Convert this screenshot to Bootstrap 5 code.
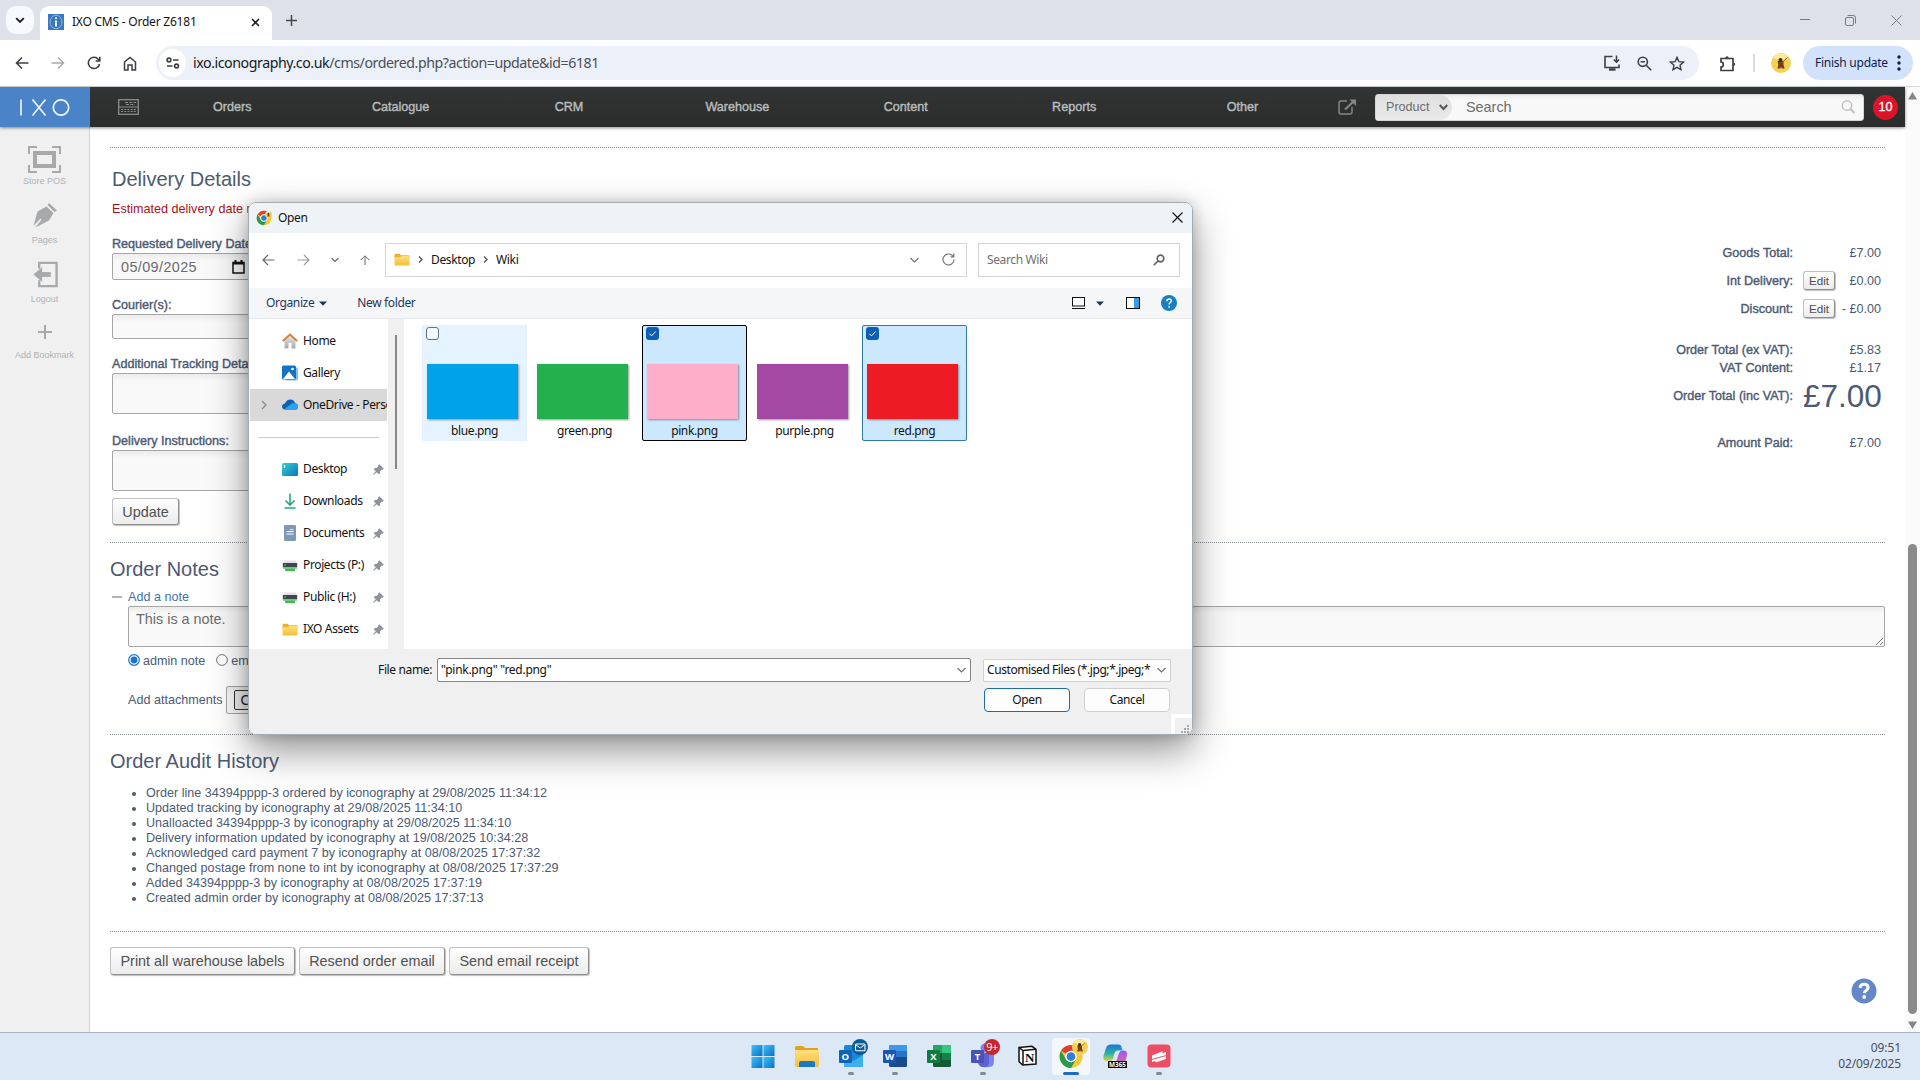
<!DOCTYPE html>
<html lang="en">
<head>
<meta charset="utf-8">
<title>IXO CMS - Order Z6181</title>
<link rel="stylesheet" href="https://cdn.jsdelivr.net/npm/bootstrap@5.3.0/dist/css/bootstrap.min.css">
<style>
html,body{height:100%}
body{overflow:hidden;width:1920px;height:1080px;font-family:"Liberation Sans",Arial,sans-serif;font-size:12.6px;line-height:18px;color:#4c5a73;background:#fff}
svg{display:block;flex:none}
.ui-font{font-family:"Noto Sans","Open Sans",sans-serif;color:#111}
/* browser chrome */
.tabstrip{height:40px;background:#dee1e9}
.tab-list{width:28px;height:28px;border-radius:10px;background:#f7f9fc;margin:6px 0 0 6px}
.browser-tab{width:232px;height:34px;margin:6px 0 0 6px;background:#fff;border-radius:9px 9px 0 0;padding:0 11px 2px 8px;font-size:12px;letter-spacing:-.22px}
.new-tab{margin-left:14px}
.tab-close{margin-right:1px}
.win-ctl{gap:35px;margin-right:18px;color:#777b82}
.toolbar{height:47px;background:#fff;border-bottom:1px solid #d5d9dc;padding:0 7px 0 15px}
.nav-icons{gap:22px}
.omnibox{height:34px;width:1543px;border-radius:17px;background:#ebf0f9;padding:0 14px 0 3px;margin-left:19px}
.omni-actions{gap:17px}
.site-info{width:27px;height:28px;border-radius:14px;background:#fff}
.url{font-size:14.2px;letter-spacing:-.44px;color:#4a4f57;margin-left:7px}
.url b{font-weight:400;color:#17191d}
.ext{margin-left:20px}
.tool-sep{width:2px;height:18px;margin:0 16px 0 17px;background:#d3dbe8}
.finish{height:34px;width:110px;border-radius:17px;background:#d3e2fb;font-size:12px;letter-spacing:-.25px;color:#0c1d4e;padding:0 12px}
/* page */
.viewport{height:945px}
.cms{width:1905px}
.cms-top{height:40px;background:linear-gradient(#323535,#2b2b2b);box-shadow:0 1px 3px rgba(0,0,0,.45);z-index:1}
.logo{width:90px;height:40px;background:#4a83c7}
.till{margin-left:28px}
.menu-list{margin-left:9px}
.menu-item{width:168.4px;color:#b9bcbc;-webkit-text-stroke:.4px #b9bcbc}
.popout{margin-left:11px}
.search-box{width:489px;height:27px;background:linear-gradient(#eceded,#f8f8f8 5px);border:1px solid #d5d5d5;border-radius:3px;font-size:14.4px;color:#6b6b6b;margin-right:9px}
.search-kind{width:76px;height:25px;background:linear-gradient(#dfdfdf,#eaeaea);border-radius:3px 14px 14px 3px;font-size:12.6px;padding:0 4px 0 10px}
.search-hint{margin-left:14px}
.search-icon{margin-right:7px}
.notif{width:25px;height:25px;border-radius:50%;background:#dc1427;color:#fff;font-size:12.6px;-webkit-text-stroke:.3px #fff;margin-right:7px}
.side{width:90px;background:#f0f0f0;border-right:1px solid #d2d3d5;color:#b1b2b4;font-size:9px;line-height:10px;padding-top:19px}
.side-link{margin-bottom:16px;gap:6px}
.side-link.pos{gap:3px}
.side-link.add{margin-top:21px;gap:11px}
.scroll{width:15px;background:#fbfbfb;padding:5px 0 3px}
.thumb-bar{width:9px;height:470px;border-radius:5px;background:#8b8b8b;margin:444px 0 7px}
.content{width:1775px;margin-left:20px;padding-top:20px}
.dots{border-top:1px dotted #84898e}
.sec-title{font-size:20px;line-height:24px;height:24px;font-weight:400;margin:14px 0 0;color:#4d5a72}
.lbl{height:17px;line-height:17px;-webkit-text-stroke:.4px #4c5a73}
.field{background:linear-gradient(#ececec,#f9f9f9 7px);border:1px solid #a6a6a6;border-radius:2px;width:400px;color:#6b6b6b;font-size:14.4px}
.delivery{height:394px}
.form-col{margin-left:2px;padding-top:5px}
.form-col .lbl{margin-top:17px}
.warn-text{margin-top:9px;color:#a90f20}
.form-col .lbl.first{margin-top:18px}
.form-col .lbl.last{margin-top:19px}
.date-field{height:27px;width:150px;padding-left:8px;letter-spacing:.4px}
.date-icon{margin-left:35px}
.courier{height:25px}
.area{height:41px}
.cms-btn{border:1px solid #c1c1c1;border-right-color:#8f8f8f;border-bottom-color:#8f8f8f;border-radius:3px;background:linear-gradient(#fefefe,#ececec);box-shadow:1px 1px 1px rgba(0,0,0,.25);color:#505050;font-size:14.4px;height:27px;display:inline-flex;align-items:center;justify-content:center;padding:0 8px;white-space:nowrap}
.cms-btn.tiny{width:32px;height:19px;font-size:11.7px;padding:0;margin-bottom:1px}
.update{margin-top:7px;width:67px}
.notes{height:191px;display:flow-root}
.add-note{height:18px;margin-top:7px;color:#4371ac}
.dash{width:10px;height:2px;background:#b1b3b5;margin:0 6px 0 2px}
.note-form{margin-left:18px}
.note-area{width:1757px;height:41px;padding:3px 7px}
.radios{height:20px;margin-top:4px}
.radios svg{margin-right:3px;margin-top:-2px}
.radio-b{margin-left:11px}
.attach{height:28px;margin-top:15px}
.attach-field{height:28px;width:320px;margin-left:3px;padding-left:7px}
.choose{border:1px solid #333;background:#efefef;height:20px;line-height:18px;padding:0 6px;color:#222;border-radius:2px}
.audit{list-style:disc;padding-left:36px;margin:13px 0 25px;line-height:15px}
.actions{margin-top:15px;gap:4px}
.actions .cms-btn{height:28px}
.print-btn{width:185px}.resend-btn{width:146px}.receipt-btn{width:140px}
.totals{margin-right:4px;padding-top:91px}
.t-row{height:28px}
.t-row.slim{height:18px}
.t-row.gap-top{margin-top:18px}
.t-row.grand{height:38px}
.t-row.paid{margin-top:14px}
.totals .lbl{margin-right:10px;text-align:right}
.totals .val{width:78px}
.big{font-size:31.5px}
.help{right:28px;bottom:28px}
/* file dialog */
.dlg{left:248px;top:202px;width:945px;height:533px;border:1px solid #a4abb1;border-radius:8px;background:#fff;overflow:hidden;font-size:12px;letter-spacing:-.37px;z-index:5}
.dlg-wrap{left:248px;top:202px;width:945px;height:533px;border-radius:8px;box-shadow:0 16px 38px rgba(0,0,0,.42),0 0 14px rgba(0,0,0,.18);z-index:4}
.dlg-title{height:30px;background:#eef3f8;padding:0 9px 1px 7px;gap:6px}
.dlg-nav{height:55px;padding:0 0 2px 13px}
.arrows{gap:21px}
.box{border:1px solid #d6d6d6;height:34px;background:#fff}
.path-box{width:582px;margin-left:15px;padding:0 11px 0 8px}
.crumb{margin:0 8px}
.reload{margin-left:23px}
.find-box{width:202px;margin-left:11px;padding:0 14px 0 8px;color:#707070}
.cmdbar{height:31px;background:#f5f6f8;border-bottom:1px solid #e6e8ea;color:#1f3559;padding:0 15px 0 17px}
.organize{margin:0 30px 0 5px}
.view-arrow{margin:0 22px 0 11px}
.help-dot{margin-left:21px}
.dlg-body{height:330px}
.tree{width:139px;padding:6px 0 0 1px}
.tree-item{height:32px;padding-left:32px;white-space:nowrap;overflow:hidden;width:137px}
.tree-item.current{background:#d9d9d9;padding-left:11px}
.tree-item.rule{padding-left:8px}
.tree-item.rule i{width:121px;height:1px;background:#ccc}
.tree-item span{margin-left:5px}
.tree-chev{margin-right:15px}
.pin-icon{margin:0 3px 0 auto}
.tree-gutter{width:16px;background:#f0f0f0;padding:16px 0 0 7px}
.tree-gutter i{display:block;width:2px;height:134px;background:#868686}
.files{padding:6px 0 0 18px;gap:5px}
.file{width:105px;height:116px;border:1px solid transparent;padding:1px 4px 1px 4px}
.file.hot{background:#e5f3ff}
.file.sel{background:#cce8ff;border-color:#2f7aa8;border-radius:2px}
.file.focus-item{border-color:#000}
.chk{width:13px;height:13px;border-radius:3px;margin-left:-1px}
.chk.on{background:#0a5fb4}
.chk.off{border:1px solid #65717e;background:#f4f9fe}
.pic{width:91px;height:55px;margin-top:24px;box-shadow:1px 1px 2px rgba(0,0,0,.4)}
.pic-blue{background:#00a2e8}.pic-green{background:#22b14c}.pic-pink{background:#ffaec9}.pic-purple{background:#a349a4}.pic-red{background:#ed1c24}
.fname{line-height:18px;margin-top:3px;text-align:center}
.dlg-foot{height:85px;background:#f0f0f0}
.foot-row{padding-top:9px}
.fn-label{width:183px}
.fn-input{width:534px;height:24px;margin-left:5px;border:1px solid #868686;border-radius:2px;padding:0 4px 0 3px;letter-spacing:-.28px}
.fn-type{width:188px;height:23px;margin-left:12px;border:1px solid #cfcfcf;border-radius:2px;background:#fdfdfd;padding:0 4px 0 3px;letter-spacing:-.42px}
.foot-btns{margin:6px 0 0 735px;gap:14px}
.w-btn{height:24px;width:86px;border:1px solid #cfcfcf;border-radius:4px;background:#fdfdfd}
.w-btn.main{border-color:#1b6f9f}
.grip{right:0;bottom:0;width:21px;height:20px;border:4px solid #fff;border-width:4px 0 0 4px;padding:7px 0 0 6px}
/* taskbar */
.taskbar{height:48px;background:#dce8f6;border-top:1px solid #a8b4c4}
.apps{margin-left:2px}
.clock{right:19px;top:7px;font-size:12px;line-height:16px;letter-spacing:-.1px;color:#4a4f57}
</style>
</head>
<body class="d-flex flex-column">
<svg width="0" height="0" class="position-absolute">
  <defs>
    <linearGradient id="gw" x1="0" y1="0" x2="1" y2="1"><stop offset="0" stop-color="#3cc2f3"/><stop offset="1" stop-color="#0b6fcf"/></linearGradient>
    <linearGradient id="gd" x1="0" y1="0" x2="1" y2="1"><stop offset="0" stop-color="#35cdd8"/><stop offset="1" stop-color="#0b76b8"/></linearGradient>
    <linearGradient id="gf" x1="0" y1="0" x2="0" y2="1"><stop offset="0" stop-color="#ffdf7c"/><stop offset="1" stop-color="#f3be3a"/></linearGradient>
    <linearGradient id="gh" x1="0" y1="0" x2="0" y2="1"><stop offset="0" stop-color="#e9e9ea"/><stop offset="1" stop-color="#a9a9ab"/></linearGradient>
    <linearGradient id="gm" x1="0" y1="0" x2="0" y2="1"><stop offset="0" stop-color="#1b74d8"/><stop offset=".55" stop-color="#2fb3a0"/><stop offset="1" stop-color="#d9cf4a"/></linearGradient>
    <linearGradient id="gn" x1="0" y1="0" x2="0" y2="1"><stop offset="0" stop-color="#8f5cf0"/><stop offset="1" stop-color="#ef6aa4"/></linearGradient>
  </defs>
  <symbol id="pin" viewBox="0 0 12 12"><path d="M7 .3 11.700 5 10.300 6.500 9.300 6.200 7.800 7.800 7.500 10.300 6.300 11.200 4 8.900 1 11.700.3 11 3.100 8 .8 5.700 1.700 4.500 4.200 4.200 5.800 2.700 5.500 1.700z" fill="#8d9299"/></symbol>
  <symbol id="folder" viewBox="0 0 16 13"><path d="M.5 2Q.5.7 1.800.7H5.500L7 2.300h7.200q1.300 0 1.300 1.300V6H.5z" fill="#e9b22e"/><path d="M.5 4.200H5.800L7.200 3h7q1.300 0 1.300 1.200v7q0 1.300-1.300 1.300H1.800Q.5 12.500.5 11.200z" fill="url(#gf)"/></symbol>
  <symbol id="drive" viewBox="0 0 16 13"><path d="M2.500 1.500h11l1.700 3H.8z" fill="#dfe2e4"/><rect x=".8" y="4" width="14.400" height="4.500" fill="#41474a"/><path d="M2 6h2" stroke="#5bd06c"/><rect x="3" y="9" width="10" height="3.300" rx="1" fill="#46b25b"/><rect x="1" y="8.500" width="14" height="1.300" fill="#74cc84"/></symbol>
  <symbol id="chrome" viewBox="0 0 24 24"><circle cx="12" cy="12" r="11" fill="#f6c831"/><path d="M12 12 2.500 6.500A11 11 0 0 1 21.500 6.500H12z" fill="#dd4032"/><path d="M2.500 6.500A11 11 0 0 0 12 23L16.800 14.800 12 17 7.200 14.800z" fill="#2a9b4b"/><circle cx="12" cy="12" r="5.500" fill="#fff"/><circle cx="12" cy="12" r="4.200" fill="#2f7de1"/></symbol>
  <symbol id="cheese" viewBox="0 0 20 20"><circle cx="10" cy="10" r="10" fill="#f3d154"/><path d="M2 4.500A10 10 0 0 1 18 4.500L10 9z" fill="#fbeb9e"/><path d="M6.500 8h6v4l1.200 3.500h-3L10 13.500l-.6 2H6.500l.8-3.500z" fill="#7b3d16"/><circle cx="9.500" cy="7" r="2" fill="#4b2a10"/><path d="m11 9.500 5.500-5" stroke="#8a5a20"/></symbol>
  <symbol id="down" viewBox="0 0 9 6"><path d="m.5 1 4 4 4-4" fill="none" stroke="#6c6c6c" stroke-width="1.100"/></symbol>
  <symbol id="crumb" viewBox="0 0 5 7"><path d="m1 .5 3 3-3 3" fill="none" stroke="#555" stroke-width="1.400"/></symbol>
  <symbol id="caret" viewBox="0 0 8 5"><path d="M0 .5h8L4 4.800z" fill="#1f3559"/></symbol>
  <symbol id="tick" viewBox="0 0 13 13"><path d="m3.300 6.700 2.200 2.200 4.200-4.400" fill="none" stroke="#fff"/></symbol>
</svg>

<!-- tab strip -->
<header class="tabstrip d-flex">
  <div class="tab-list d-flex align-items-center justify-content-center"><svg width="10" height="7" viewBox="0 0 10 7" fill="none" stroke="#1b1c1f" stroke-width="1.800"><path d="M1.200 1.200 5 5 8.800 1.200"/></svg></div>
  <div class="browser-tab ui-font d-flex align-items-center">
    <svg width="16" height="16" viewBox="0 0 16 16"><rect width="16" height="16" fill="#3d78bd"/><ellipse cx="8" cy="8" rx="6" ry="6.800" fill="none" stroke="#8fc3ea" stroke-width=".9"/><path d="M8 6.500V12.500M8 3.200v1.800" stroke="#fff" stroke-width="1.800"/></svg>
    <span class="ms-2">IXO CMS - Order Z6181</span>
    <svg class="ms-auto tab-close" width="9" height="9" viewBox="0 0 9 9" stroke="#222" stroke-width="1.600"><path d="m1 1 7 7M8 1 1 8"/></svg>
  </div>
  <svg class="align-self-center new-tab" width="11" height="11" viewBox="0 0 11 11" stroke="#45484d" stroke-width="1.500"><path d="M5.500 0v11M0 5.500h11"/></svg>
  <div class="win-ctl ms-auto d-flex align-items-center">
    <svg width="10" height="10" viewBox="0 0 10 10" stroke="currentColor"><path d="M0 4.500h10"/></svg>
    <svg width="11" height="11" viewBox="0 0 11 11" fill="none" stroke="currentColor"><rect x=".5" y="2.500" width="8" height="8" rx="1.500"/><path d="M2.500.5h6q2 0 2 2v6"/></svg>
    <svg width="11" height="11" viewBox="0 0 11 11" stroke="currentColor"><path d="m.5.5 10 10M10.500.5l-10 10"/></svg>
  </div>
</header>

<!-- toolbar -->
<div class="toolbar d-flex align-items-center">
  <div class="nav-icons d-flex align-items-center">
    <svg width="14" height="14" viewBox="0 0 14 14" fill="none" stroke="#3c4045" stroke-width="1.600"><path d="M13.500 7H1.500M7 1.500 1.500 7 7 12.500"/></svg>
    <svg width="14" height="14" viewBox="0 0 14 14" fill="none" stroke="#a6a9ad" stroke-width="1.500"><path d="M.5 7h12M7 1.500 12.500 7 7 12.500"/></svg>
    <svg width="14" height="14" viewBox="0 0 14 14" fill="none" stroke="#3c4045" stroke-width="1.600"><path d="M12.500 8A5.600 5.600 0 1 1 11.200 3.200L12.500 4.800M12.800.8V5H8.600"/></svg>
    <svg width="14" height="15" viewBox="0 0 14 15" fill="none" stroke="#3c4045" stroke-width="1.500"><path d="M1.500 6 7 1.500 12.500 6v8H9V9H5v5H1.500z"/></svg>
  </div>
  <div class="omnibox d-flex align-items-center">
    <div class="site-info d-flex align-items-center justify-content-center"><svg width="14" height="12" viewBox="0 0 14 12" fill="none" stroke="#3c4045" stroke-width="1.600"><circle cx="3" cy="3" r="1.900"/><path d="M7 3h5.500M1 9h5.500"/><circle cx="10.500" cy="9" r="1.900"/></svg></div>
    <span class="url ui-font"><b>ixo.iconography.co.uk</b>/cms/ordered.php?action=update&amp;id=6181</span>
    <div class="omni-actions ms-auto d-flex align-items-center">
      <svg width="16" height="16" viewBox="0 0 16 16" fill="none" stroke="#3c4045" stroke-width="1.600"><path d="M8.500 1.500H1V12.500h14V9.500M12.500.5v6.500M9.800 4.500 12.500 7.200 15.200 4.500"/><path d="M5 14.500h6.500" stroke-width="2.400"/></svg>
      <svg width="15" height="15" viewBox="0 0 15 15" fill="none" stroke="#3c4045" stroke-width="1.600"><circle cx="5.800" cy="5.800" r="4.600"/><path d="m9.200 9.200 5 5M3.600 5.800H8"/></svg>
      <svg width="16" height="15" viewBox="0 0 16 15" fill="none" stroke="#3c4045" stroke-width="1.400"><path d="m8 1.400 1.900 4.300 4.600.4L11 9.200l1 4.500L8 11.300l-4 2.400 1-4.500L1.500 6.100l4.600-.4z"/></svg>
    </div>
  </div>
  <svg class="ext" width="17" height="17" viewBox="0 0 17 17" fill="none" stroke="#3c4045" stroke-width="1.700"><path d="M2 3.500H14V15.500H2V12q2.300 0 2.300-2.500T2 7z"/><path d="M6.300 3a1.700 1.700 0 0 1 3.400 0zM14.500 7.500a1.700 1.700 0 0 1 0 3.400z" fill="#3c4045" stroke="none"/></svg>
  <span class="tool-sep"></span>
  <svg width="20" height="20"><use href="#cheese"/></svg>
  <div class="finish ui-font d-flex align-items-center ms-auto"><span class="text-nowrap">Finish update</span>
    <svg class="ms-auto" width="4" height="16" viewBox="0 0 4 16" fill="#0c1d4e"><circle cx="2" cy="2" r="1.700"/><circle cx="2" cy="8" r="1.700"/><circle cx="2" cy="14" r="1.700"/></svg></div>
</div>

<!-- page viewport -->
<div class="viewport d-flex">
  <div class="cms d-flex flex-column position-relative">
    <nav class="cms-top d-flex align-items-center position-relative">
      <div class="logo d-flex align-items-center justify-content-center"><svg width="50" height="17" viewBox="0 0 50 17" fill="none" stroke="#eaf3fd" stroke-width="1.700"><path d="M1 .5v16M12.500.5l13 16M25.500.5l-13 16"/><circle cx="41" cy="8.500" r="7.700"/></svg></div>
      <svg class="till" width="21" height="16" viewBox="0 0 21 16" fill="none" stroke="#8a8c8c"><rect x=".7" y=".7" width="19.600" height="14.600" stroke-width="1.300"/><path d="M1 8h19"/><path d="M7 3.500h11M8 5.500h9" stroke-dasharray="3 1.300"/><path d="M3 10.500h15M3 12.500h15" stroke-dasharray="2 1.200"/></svg>
      <div class="menu-list d-flex text-center">
        <div class="menu-item">Orders</div><div class="menu-item">Catalogue</div><div class="menu-item">CRM</div><div class="menu-item">Warehouse</div><div class="menu-item">Content</div><div class="menu-item">Reports</div><div class="menu-item">Other</div>
      </div>
      <svg class="popout" width="19" height="16" viewBox="0 0 19 16" fill="none" stroke="#858787" stroke-width="1.500"><path d="M9 2H3Q1 2 1 4v9q0 2 2 2h9q2 0 2-2V8"/><path d="M7 10.500 15.500 2.500" stroke-width="2.200"/><path d="M11.500.5H18V7z" fill="#858787" stroke="none"/></svg>
      <div class="search-box d-flex align-items-center ms-auto">
        <div class="search-kind d-flex align-items-center justify-content-between"><span>Product</span><svg width="9" height="7" viewBox="0 0 9 7" fill="none" stroke="#555" stroke-width="2"><path d="m.8 1 3.700 4L8.200 1"/></svg></div>
        <span class="search-hint">Search</span>
        <svg class="search-icon ms-auto" width="15" height="14" viewBox="0 0 15 14" fill="none" stroke="#bfc0c0" stroke-width="1.500"><circle cx="6" cy="5.500" r="4.700"/><path d="m9.500 9 4 4" stroke-width="2.200"/></svg>
      </div>
      <div class="notif d-flex align-items-center justify-content-center">10</div>
    </nav>
    <div class="d-flex flex-grow-1">
      <aside class="side">
        <div class="side-link pos d-flex flex-column align-items-center"><svg width="33" height="27" viewBox="0 0 33 27" fill="none" stroke="#a7a9ab"><path d="M9 1H1v7M24 1h8v7M9 26H1v-7M24 26h8v-7" stroke-width="2"/><rect x="7" y="7" width="19" height="13" stroke-width="4"/></svg>Store POS</div>
        <div class="side-link d-flex flex-column align-items-center"><svg width="26" height="27" viewBox="0 0 26 27"><path d="M17 1 25 8.500 22.500 10 15.500 3zM14.500 4.500 21.500 11 17 18.500 3.500 25.500 9.500 17.500 8.500 16.500 1.500 24 5.500 9.500z" fill="#a7a9ab"/></svg>Pages</div>
        <div class="side-link d-flex flex-column align-items-center"><svg width="26" height="27" viewBox="0 0 26 28" fill="none" stroke="#a7a9ab"><path d="M7 8V2H25V26H7V20" stroke-width="2.400"/><path d="M19 14H6" stroke-width="5"/><path d="M10 6.500 1 14l9 7.500z" fill="#a7a9ab" stroke="none"/></svg>Logout</div>
        <div class="side-link add d-flex flex-column align-items-center"><svg width="14" height="14" viewBox="0 0 14 14" stroke="#a7a9ab" stroke-width="2"><path d="M7 0v14M0 7h14"/></svg>Add Bookmark</div>
      </aside>
      <main class="content">
        <div class="dots"></div>
        <section class="delivery d-flex justify-content-between">
          <div class="form-col">
            <h2 class="sec-title">Delivery Details</h2>
            <div class="warn-text">Estimated delivery date not set</div>
            <div class="lbl first">Requested Delivery Date:</div>
            <div class="field date-field d-flex align-items-center"><span>05/09/2025</span><svg class="date-icon" width="13" height="14" viewBox="0 0 13 14" fill="none" stroke="#111" stroke-width="1.500"><rect x="1" y="2.500" width="11" height="10.500"/><path d="M1 3.500h11M3.500 0v3M9.500 0v3" stroke-width="2"/></svg></div>
            <div class="lbl">Courier(s):</div>
            <div class="field courier"></div>
            <div class="lbl">Additional Tracking Details:</div>
            <div class="field area"></div>
            <div class="lbl last">Delivery Instructions:</div>
            <div class="field area"></div>
            <button class="cms-btn update">Update</button>
          </div>
          <div class="totals">
            <div class="t-row d-flex align-items-center justify-content-end"><span class="lbl">Goods Total:</span><span class="val text-end">£7.00</span></div>
            <div class="t-row d-flex align-items-center justify-content-end"><span class="lbl">Int Delivery:</span><span class="val d-flex justify-content-between align-items-center"><button class="cms-btn tiny">Edit</button>£0.00</span></div>
            <div class="t-row d-flex align-items-center justify-content-end"><span class="lbl">Discount:</span><span class="val d-flex justify-content-between align-items-center"><button class="cms-btn tiny">Edit</button>- £0.00</span></div>
            <div class="t-row slim gap-top d-flex align-items-center justify-content-end"><span class="lbl">Order Total (ex VAT):</span><span class="val text-end">£5.83</span></div>
            <div class="t-row slim d-flex align-items-center justify-content-end"><span class="lbl">VAT Content:</span><span class="val text-end">£1.17</span></div>
            <div class="t-row grand d-flex align-items-center justify-content-end"><span class="lbl">Order Total (inc VAT):</span><span class="val text-end big">£7.00</span></div>
            <div class="t-row paid d-flex align-items-center justify-content-end"><span class="lbl">Amount Paid:</span><span class="val text-end">£7.00</span></div>
          </div>
        </section>
        <div class="dots"></div>
        <section class="notes">
          <h2 class="sec-title">Order Notes</h2>
          <div class="add-note d-flex align-items-center"><span class="dash"></span>Add a note</div>
          <div class="note-form">
            <div class="field note-area position-relative">This is a note.
              <svg class="position-absolute bottom-0 end-0" width="9" height="9" viewBox="0 0 9 9" stroke="#777"><path d="M8 1 1 8M8 5 5 8"/></svg></div>
            <div class="radios d-flex align-items-center">
              <svg width="12" height="12" viewBox="0 0 12 12"><circle cx="6" cy="6" r="5.300" fill="#fff" stroke="#1a73c9" stroke-width="1.200"/><circle cx="6" cy="6" r="3.400" fill="#1a73c9"/></svg>admin note
              <svg class="radio-b" width="12" height="12" viewBox="0 0 12 12"><circle cx="6" cy="6" r="5.400" fill="#fff" stroke="#767676"/></svg>email note
            </div>
            <div class="attach d-flex align-items-center">Add attachments
              <div class="field attach-field d-flex align-items-center"><span class="choose">Choose files</span></div></div>
          </div>
        </section>
        <div class="dots"></div>
        <h2 class="sec-title">Order Audit History</h2>
        <ul class="audit">
          <li>Order line 34394pppp-3 ordered by iconography at 29/08/2025 11:34:12</li>
          <li>Updated tracking by iconography at 29/08/2025 11:34:10</li>
          <li>Unalloacted 34394pppp-3 by iconography at 29/08/2025 11:34:10</li>
          <li>Delivery information updated by iconography at 19/08/2025 10:34:28</li>
          <li>Acknowledged card payment 7 by iconography at 08/08/2025 17:37:32</li>
          <li>Changed postage from none to int by iconography at 08/08/2025 17:37:29</li>
          <li>Added 34394pppp-3 by iconography at 08/08/2025 17:37:19</li>
          <li>Created admin order by iconography at 08/08/2025 17:37:13</li>
        </ul>
        <div class="dots"></div>
        <div class="actions d-flex">
          <button class="cms-btn print-btn">Print all warehouse labels</button>
          <button class="cms-btn resend-btn">Resend order email</button>
          <button class="cms-btn receipt-btn">Send email receipt</button>
        </div>
      </main>
    </div>
    <svg class="help position-absolute" width="26" height="26" viewBox="0 0 26 26"><circle cx="13" cy="13" r="12.500" fill="#6487c8"/><path d="M9 9.800q.3-3.600 4.100-3.600 4 0 4 3.200 0 1.800-2 3.100-1.700 1-1.700 2.800" fill="none" stroke="#fff" stroke-width="3"/><circle cx="13.200" cy="19" r="1.900" fill="#fff"/></svg>
  </div>
  <div class="scroll d-flex flex-column align-items-center">
    <svg width="9" height="8" viewBox="0 0 9 8" fill="#858585"><path d="M4.500 0 9 7.500H0z"/></svg>
    <div class="thumb-bar"></div>
    <svg width="9" height="8" viewBox="0 0 9 8" fill="#858585"><path d="M4.500 8 9 .5H0z"/></svg>
  </div>
</div>

<!-- taskbar -->
<footer class="taskbar position-relative d-flex justify-content-center">
  <div class="apps d-flex">
    <svg width="44" height="46" viewBox="0 0 44 46"><g fill="url(#gw)"><rect x="10.500" y="12" width="11" height="11"/><rect x="22.500" y="12" width="11" height="11"/><rect x="10.500" y="24" width="11" height="11"/><rect x="22.500" y="24" width="11" height="11"/></g></svg>
    <svg width="44" height="46" viewBox="0 0 44 46"><path d="M10 15q0-2 2-2h6l2 2h13v6H10z" fill="#e0a320"/><path d="M10 17h24v15q0 2-2 2H12q-2 0-2-2z" fill="url(#gf)"/><path d="M14 34v-4q0-2 2-2h12q2 0 2 2v4z" fill="#1977c4"/></svg>
    <svg width="44" height="46" viewBox="0 0 44 46"><rect x="15" y="12" width="19" height="22" rx="1.500" fill="#1c87d8"/><path d="m15 22 9.500 6L34 22v12H15z" fill="#3fb0ee"/><rect x="10" y="17" width="13" height="13" rx="1" fill="#0d63b5"/><text x="16.300" y="27" font-family="Open Sans" font-weight="700" font-size="9.500" text-anchor="middle" fill="#fff">O</text><circle cx="31" cy="14" r="8" fill="#0c5a99"/><rect x="26.500" y="11" width="9.500" height="6.800" rx="1" fill="none" stroke="#fff" stroke-width="1.100"/><path d="m27 12 4.200 3 4.200-3" fill="none" stroke="#fff"/><rect x="19" y="39" width="6" height="3" rx="1.500" fill="#85898f"/></svg>
    <svg width="44" height="46" viewBox="0 0 44 46"><rect x="16" y="12" width="18" height="22" rx="1.500" fill="#184a94"/><path d="M16 12h18v6H16z" fill="#3d9ae6"/><path d="M16 18h18v6H16z" fill="#2a72cc"/><rect x="10" y="17" width="13" height="13" rx="1" fill="#1856b0"/><text x="16.500" y="27" font-family="Open Sans" font-weight="700" font-size="9.500" text-anchor="middle" fill="#fff">W</text><rect x="19" y="39" width="6" height="3" rx="1.500" fill="#85898f"/></svg>
    <svg width="44" height="46" viewBox="0 0 44 46"><rect x="16" y="12" width="18" height="22" rx="1.500" fill="#145c35"/><path d="M16 12h9v8h-9z" fill="#24a365"/><path d="M25 12h9v8h-9z" fill="#36c481"/><path d="M25 20h9v7h-9z" fill="#178045"/><rect x="10" y="17" width="13" height="13" rx="1" fill="#107a40"/><text x="16.500" y="27" font-family="Open Sans" font-weight="700" font-size="9.500" text-anchor="middle" fill="#fff">X</text></svg>
    <svg width="44" height="46" viewBox="0 0 44 46"><circle cx="24" cy="15" r="4.500" fill="#7b83eb"/><path d="M17 20h16v8q0 6-5 6-11 2-11-7z" fill="#7b83eb"/><path d="M17 20h11v9q0 5-5 5-6 0-6-6z" fill="#5c62cf"/><rect x="10" y="17" width="13" height="13" rx="1" fill="#4a52b5"/><text x="16.500" y="27" font-family="Open Sans" font-weight="700" font-size="9.500" text-anchor="middle" fill="#fff">T</text><circle cx="31" cy="14" r="8" fill="#c5282c"/><text x="31" y="18" font-family="Open Sans" font-size="11" text-anchor="middle" letter-spacing="-.5" fill="#fff">9+</text><rect x="19" y="39" width="6" height="3" rx="1.500" fill="#85898f"/></svg>
    <svg width="44" height="46" viewBox="0 0 44 46"><path d="m14 14.500 13-1.200 4 3V31l-13.500 1L14 28.500z" fill="#fff" stroke="#111" stroke-width="1.500"/><path d="m14 14.500 4 3L31 16.300M18 17.500V32" fill="none" stroke="#111" stroke-width="1.500"/><text x="24.600" y="29.300" font-family="Liberation Serif" font-weight="700" font-size="13" text-anchor="middle" fill="#111">N</text></svg>
    <svg width="44" height="46" viewBox="0 0 44 46"><rect x="3" y="5" width="38" height="37" rx="4" fill="#f4f8fd"/><use href="#chrome" x="9.500" y="11" width="25" height="25"/><use href="#cheese" x="23" y="6" width="16" height="16"/><rect x="14" y="39" width="16" height="3" rx="1.500" fill="#1a6fc0"/></svg>
    <svg width="44" height="46" viewBox="0 0 44 46"><path d="M13.500 28q-4 0-3-5l2.500-8q1-3.500 5-3.500h7.500q2.500 0 3.200 3l.8 3h-4.500q-3 0-4 4l-1 4q-.8 2.500-3.500 2.500z" fill="url(#gm)"/><path d="M30 17.500q5 0 4 5l-2 7q-1 4-5 4h-7l3-4 2.500-8q1-4 4.500-4z" fill="url(#gn)"/><rect x="15" y="28" width="19" height="7" fill="#050505"/><text x="24.500" y="34.200" font-family="Open Sans" font-weight="700" font-size="7.500" text-anchor="middle" textLength="17" lengthAdjust="spacingAndGlyphs" fill="#fff">M365</text></svg>
    <svg width="44" height="46" viewBox="0 0 44 46"><rect x="10.500" y="11.500" width="23" height="23" rx="4" fill="#ee4e63"/><path d="M15 22.500 25.500 18.300V20.300L29 19V22L15 26zM15 27 29 23V26L18.500 29.500V27.800L15 29z" fill="#fff"/><rect x="19" y="39" width="6" height="3" rx="1.500" fill="#85898f"/></svg>
  </div>
  <div class="clock ui-font position-absolute text-end">09:51<br>02/09/2025</div>
</footer>

<!-- file open dialog -->
<div class="dlg-wrap position-absolute"></div>
<div class="dlg ui-font position-absolute d-flex flex-column">
  <div class="dlg-title d-flex align-items-center"><svg width="16" height="16" viewBox="0 0 16 16"><use href="#chrome" width="16" height="16"/><use href="#cheese" x="9" y="1" width="7" height="7"/></svg><span>Open</span>
    <svg class="ms-auto" width="11" height="11" viewBox="0 0 11 11" stroke="#111" stroke-width="1.200"><path d="m.5.500 10 10M10.500.5l-10 10"/></svg></div>
  <div class="dlg-nav d-flex align-items-center">
    <div class="arrows d-flex align-items-center">
      <svg width="13" height="12" viewBox="0 0 13 12" fill="none" stroke="#6a6a6a" stroke-width="1.200"><path d="M12.500 6H1M6 1 1 6l5 5"/></svg>
      <svg width="14" height="12" viewBox="0 0 14 12" fill="none" stroke="#9a9a9a" stroke-width="1.200"><path d="M1.500 6H13M8 1l5 5-5 5"/></svg>
      <svg width="8" height="6" viewBox="0 0 8 6" fill="none" stroke="#666" stroke-width="1.200"><path d="m.5 1 3.500 3.500L7.500 1"/></svg>
      <svg width="10" height="12" viewBox="0 0 12 12" fill="none" stroke="#6a6a6a" stroke-width="1.200"><path d="M6 12V1M1 6l5-5 5 5"/></svg>
    </div>
    <div class="box path-box d-flex align-items-center">
      <svg width="16" height="13"><use href="#folder"/></svg>
      <svg class="crumb" width="5" height="7"><use href="#crumb"/></svg><span>Desktop</span>
      <svg class="crumb" width="5" height="7"><use href="#crumb"/></svg><span>Wiki</span>
      <svg class="ms-auto" width="9" height="6"><use href="#down"/></svg>
      <svg class="reload" width="13" height="13" viewBox="0 0 13 13" fill="none" stroke="#777" stroke-width="1.200"><path d="M12 6.500A5.500 5.500 0 1 1 9.800 2.100L11.500 3.500M11.800.5v3.300H8.500"/></svg>
    </div>
    <div class="box find-box d-flex align-items-center"><span>Search Wiki</span><svg class="ms-auto" width="12" height="12" viewBox="0 0 12 12" fill="none" stroke="#666" stroke-width="1.700"><circle cx="7.500" cy="4.500" r="3.300"/><path d="M5 7 .8 11.200"/></svg></div>
  </div>
  <div class="cmdbar d-flex align-items-center"><span>Organize</span><svg class="organize" width="8" height="5"><use href="#caret"/></svg><span>New folder</span>
    <svg class="ms-auto" width="13" height="12" viewBox="0 0 13 12" fill="#fff" stroke="#111"><rect x=".5" y=".5" width="12" height="8.500"/><path d="M0 11.500h13"/></svg>
    <svg class="view-arrow" width="8" height="5"><use href="#caret"/></svg>
    <svg width="14" height="12" viewBox="0 0 14 12"><rect x=".5" y=".5" width="13" height="11" fill="#fff"/><rect x="8" y="1" width="5" height="10" fill="#3b9ae0"/><rect x=".5" y=".5" width="13" height="11" fill="none" stroke="#111"/></svg>
    <svg class="help-dot" width="16" height="16" viewBox="0 0 16 16"><circle cx="8" cy="8" r="8" fill="#1a7fc2"/><path d="M5.800 6.200q.2-2.200 2.300-2.200 2.200 0 2.200 1.900 0 1-1.200 1.800-1 .7-1 1.800" fill="none" stroke="#fff" stroke-width="1.400"/><circle cx="8.100" cy="11.800" r=".9" fill="#fff"/></svg>
  </div>
  <div class="dlg-body d-flex">
    <div class="tree">
      <div class="tree-item d-flex align-items-center"><svg width="16" height="16" viewBox="0 0 16 16"><path d="M2.500 7 8 2l5.500 5v8.500h-4V10h-3v5.500h-4z" fill="url(#gh)"/><path d="M.8 8 8 1.500 15.200 8" fill="none" stroke="#d9803a" stroke-width="2"/></svg><span>Home</span></div>
      <div class="tree-item d-flex align-items-center"><svg width="16" height="16" viewBox="0 0 16 16"><rect x="3" y="2.500" width="13" height="13" rx="2" fill="#7cc2f2"/><rect x="0" y=".5" width="14" height="14" rx="1.500" fill="#1272c4"/><path d="m1 14 6-7.500L13 14z" fill="#fff"/><circle cx="10.500" cy="4" r="1.300" fill="#fff"/></svg><span>Gallery</span></div>
      <div class="tree-item current d-flex align-items-center"><svg class="tree-chev" width="6" height="10" viewBox="0 0 6 10" fill="none" stroke="#888" stroke-width="1.300"><path d="m1 1 4 4-4 4"/></svg><svg width="16" height="12" viewBox="0 0 16 12"><path d="M3.500 10.500Q0 10.500 0 7.500 0 5 3 4.500 4.500.5 8.500.5q3.500 0 4.500 3.500 3 .5 3 3.500 0 3-3 3z" fill="#0f62b5"/><path d="M2 10.500 9 5q2-1.500 4-.5 3 .8 3 3.500 0 3-3 3H4z" fill="#2aa4ee"/></svg><span>OneDrive - Perso</span></div>
      <div class="tree-item rule d-flex align-items-center"><i></i></div>
      <div class="tree-item d-flex align-items-center"><svg width="16" height="13" viewBox="0 0 16 13"><rect width="16" height="13" rx="1.500" fill="url(#gd)"/><path d="M2.500 2v3" stroke="#fff" stroke-width="1.300"/></svg><span>Desktop</span><svg class="pin-icon" width="11" height="11"><use href="#pin"/></svg></div>
      <div class="tree-item d-flex align-items-center"><svg width="16" height="16" viewBox="0 0 16 16" fill="none" stroke="#25a58b" stroke-width="1.600"><path d="M8 .5v11M3.500 7.500 8 12l4.500-4.500M2.500 15h11"/></svg><span>Downloads</span><svg class="pin-icon" width="11" height="11"><use href="#pin"/></svg></div>
      <div class="tree-item d-flex align-items-center"><svg width="16" height="16" viewBox="0 0 16 16"><rect x="2" y="0" width="12" height="16" rx="1" fill="#8098b4"/><path d="M4.500 6.500h7M4.500 9h7" stroke="#fff" stroke-width="1.200"/><path d="M8 4.500h3.500" stroke="#dbe4ee"/></svg><span>Documents</span><svg class="pin-icon" width="11" height="11"><use href="#pin"/></svg></div>
      <div class="tree-item d-flex align-items-center"><svg width="16" height="13"><use href="#drive"/></svg><span>Projects (P:)</span><svg class="pin-icon" width="11" height="11"><use href="#pin"/></svg></div>
      <div class="tree-item d-flex align-items-center"><svg width="16" height="13"><use href="#drive"/></svg><span>Public (H:)</span><svg class="pin-icon" width="11" height="11"><use href="#pin"/></svg></div>
      <div class="tree-item d-flex align-items-center"><svg width="16" height="13"><use href="#folder"/></svg><span>IXO Assets</span><svg class="pin-icon" width="11" height="11"><use href="#pin"/></svg></div>
    </div>
    <div class="tree-gutter"><i></i></div>
    <div class="files d-flex">
      <div class="file hot"><div class="chk off"></div><div class="pic pic-blue"></div><div class="fname">blue.png</div></div>
      <div class="file"><div class="chk"></div><div class="pic pic-green"></div><div class="fname">green.png</div></div>
      <div class="file sel focus-item"><div class="chk on"><svg width="13" height="13"><use href="#tick"/></svg></div><div class="pic pic-pink"></div><div class="fname">pink.png</div></div>
      <div class="file"><div class="chk"></div><div class="pic pic-purple"></div><div class="fname">purple.png</div></div>
      <div class="file sel"><div class="chk on"><svg width="13" height="13"><use href="#tick"/></svg></div><div class="pic pic-red"></div><div class="fname">red.png</div></div>
    </div>
  </div>
  <div class="dlg-foot position-relative">
    <div class="foot-row d-flex align-items-center">
      <span class="fn-label text-end">File name:</span>
      <div class="fn-input d-flex align-items-center bg-white"><span>"pink.png" "red.png"</span><svg class="ms-auto" width="9" height="6"><use href="#down"/></svg></div>
      <div class="fn-type d-flex align-items-center"><span>Customised Files (*.jpg;*.jpeg;*</span><svg class="ms-auto" width="9" height="6"><use href="#down"/></svg></div>
    </div>
    <div class="foot-btns d-flex"><div class="w-btn main d-flex align-items-center justify-content-center">Open</div><div class="w-btn d-flex align-items-center justify-content-center">Cancel</div></div>
    <div class="grip position-absolute"><svg width="9" height="9" viewBox="0 0 9 9" fill="#aaa"><path d="M6 0h2v2H6zM3 3h2v2H3zM6 3h2v2H6zM0 6h2v2H0zM3 6h2v2H3zM6 6h2v2H6z"/></svg></div>
  </div>
</div>
<script src="https://cdn.jsdelivr.net/npm/bootstrap@5.3.0/dist/js/bootstrap.bundle.min.js"></script>
</body>
</html>
